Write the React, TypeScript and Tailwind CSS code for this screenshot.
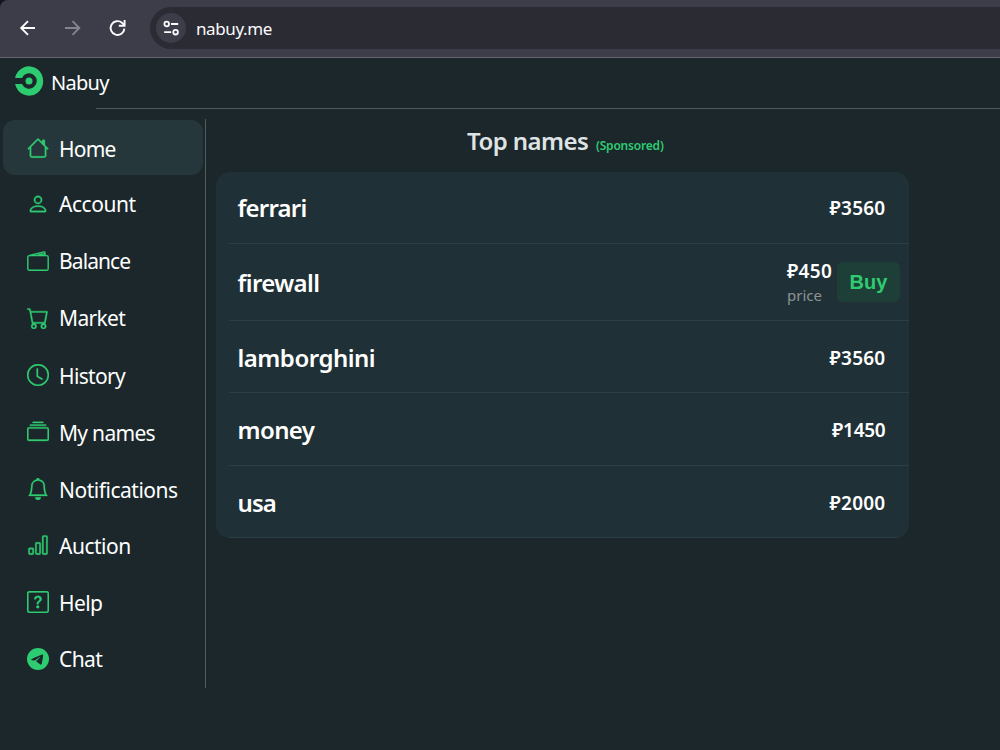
import type { ReactNode } from 'react';
import { BsBarChart, BsBell, BsCart, BsClock, BsCollection, BsHouse, BsPerson, BsQuestionSquare, BsTelegram } from 'react-icons/bs';

function BrowserBar() {
  return (
    <div className="h-[58px] shrink-0 bg-[#15141a]">
      <div className="flex h-[58px] items-start rounded-tl-[8px] border-b border-[#64636e] bg-[#3d3d4a]">
        <svg className="ml-[17px] mt-[17px] shrink-0" width="22" height="22" viewBox="0 0 22 22" fill="none" stroke="#fbfbfe" strokeWidth="1.9">
          <path d="M18 11H4.500M11 4.200 4.200 11l6.800 6.800" />
        </svg>
        <svg className="ml-[23px] mt-[17px] shrink-0" width="22" height="22" viewBox="0 0 22 22" fill="none" stroke="#85848e" strokeWidth="1.900">
          <path d="M3 11h13.500M10.500 4.200 17.300 11l-6.800 6.800" />
        </svg>
        <svg className="ml-[22px] mt-[17px] shrink-0" width="22" height="22" viewBox="0 0 22 22" fill="none" stroke="#fbfbfe" strokeWidth="1.900">
          <path d="M18.400 11.600a6.900 6.900 0 1 1-2.400-5.800l2.400 2.400" />
          <path d="M18.600 3v5.800h-5.800" />
        </svg>
        <div className="ml-[22px] mt-[7px] flex h-[42px] flex-1 items-center rounded-l-full bg-[#2b2b34] pl-[6px]">
          <div className="flex h-[30px] w-[30px] items-center justify-center rounded-full bg-[#3d3d4a]">
            <svg width="18" height="18" viewBox="0 0 18 18" fill="none" stroke="#fbfbfe" strokeWidth="1.800">
              <circle cx="4.700" cy="5" r="2.300" />
              <circle cx="13.600" cy="13.200" r="2.300" />
              <path d="M9 5h7.200M2.200 13.200h7" />
            </svg>
          </div>
          <span className="ml-[10px] pt-[2px] text-[17px] leading-[24px] tracking-[-0.400px] text-[#fbfbfe]">nabuy.me</span>
        </div>
      </div>
    </div>
  );
}

function Logo() {
  return (
    <svg className="mb-[2px]" width="30" height="30" viewBox="0 0 30 30">
      <circle cx="15" cy="15" r="3.500" fill="#2ecc71" />
      <path d="M1.100 12A14.200 14.700 0 1 1 1.100 18H8a7.700 7.700 0 1 0 0-6z" fill="#2ecc71" />
    </svg>
  );
}

function WalletIcon() {
  return (
    <svg width="22" height="22" viewBox="0 0 22 22" fill="none" stroke="currentColor" strokeWidth="1.400" strokeLinejoin="round">
      <rect x="0.800" y="5.600" width="20.400" height="14.700" rx="1.600" />
      <path d="M2.600 5.500 17 1.900q1-.2 1 .8v2.800M10.500 5.300 17.500 3.700" />
    </svg>
  );
}

const items: { label: string; icon: ReactNode; text: string }[] = [
  { label: 'Home', icon: <BsHouse />, text: 'pt-[2px] tracking-[-0.800px]' },
  { label: 'Account', icon: <BsPerson />, text: 'tracking-[-0.450px]' },
  { label: 'Balance', icon: <WalletIcon />, text: 'tracking-[-0.900px]' },
  { label: 'Market', icon: <BsCart />, text: 'tracking-[-0.650px]' },
  { label: 'History', icon: <BsClock />, text: 'pt-[2px] tracking-[-0.650px]' },
  { label: 'My names', icon: <BsCollection />, text: 'pt-[2px] tracking-[-0.700px]' },
  { label: 'Notifications', icon: <BsBell />, text: 'pt-[2px] tracking-[-0.480px]' },
  { label: 'Auction', icon: <BsBarChart />, text: 'pt-[2px] tracking-[-0.500px]' },
  { label: 'Help', icon: <BsQuestionSquare />, text: 'pt-[2px] tracking-[-0.600px]' },
  { label: 'Chat', icon: <BsTelegram />, text: 'tracking-[-0.600px]' },
];

function Sidebar() {
  return (
    <nav className="mt-[10px] flex h-[569px] w-[206px] shrink-0 flex-col gap-[1.850px] border-r border-[#545b5d] pl-[3px] pt-[1px]">
      {items.map((item, i) => (
        <a key={item.label} className={`flex h-[55px] w-[200px] shrink-0 items-center rounded-[12px] pl-[24px] ${i === 0 ? 'bg-[#25373b]' : ''}`}>
          <span className={`text-[22px] text-[#2ecc71] ${i === 9 || i === 2 ? '' : '[&_path]:stroke-[#2ecc71] [&_path]:[stroke-width:0.25px]'}`}>{item.icon}</span>
          <span className={`ml-[10px] whitespace-nowrap text-[21px] leading-[30px] text-white ${item.text}`}>{item.label}</span>
        </a>
      ))}
    </nav>
  );
}

const names = [
  { name: 'ferrari', price: '₽3560', height: 'h-[72px]', text: 'tracking-[-0.800px]' },
  { name: 'firewall', price: '₽450', height: 'h-[77px]', text: 'tracking-[-0.600px]', buy: true },
  { name: 'lamborghini', price: '₽3560', height: 'h-[72px]', text: 'pt-[2px] tracking-[-0.500px]' },
  { name: 'money', price: '₽1450', height: 'h-[73px]', text: 'tracking-[-0.600px]' },
  { name: 'usa', price: '₽2000', height: 'h-[72px]', text: 'pt-[2px] tracking-[-0.900px]' },
];

function NameList() {
  return (
    <div className="w-[693px] overflow-hidden rounded-[14px] bg-[#1f3136] pl-[13px]">
      {names.map((n, i) => (
        <div key={n.name} className={`flex items-center justify-between border-b border-[#2c3e43] pl-[8.500px] ${n.height} ${n.buy ? 'pr-[9px]' : 'pr-[23.500px]'}`}>
          <span className={`pt-[1px] text-[24px] font-semibold leading-[32px] text-white ${n.text}`}>{n.name}</span>
          {n.buy ? (
            <div className="flex items-center">
              <div className="flex w-[50px] flex-col pt-[1px]">
                <span className="text-[19px] font-semibold leading-[24px] tracking-[0.350px] text-white">{n.price}</span>
                <span className="text-[15px] leading-[24px] text-[#8d9293]">price</span>
              </div>
              <button className="h-[40px] w-[63px] rounded-[6px] bg-[#1e3f38] font-['Liberation_Sans'] text-[20px] font-bold text-[#2ecc71]">Buy</button>
            </div>
          ) : (
            <span className={`text-[19px] font-semibold leading-[26px] text-white ${i > 1 ? 'pt-[2px]' : ''} ${n.price === '₽1450' ? 'tracking-[-0.250px]' : 'tracking-[0.250px]'}`}>{n.price}</span>
          )}
        </div>
      ))}
    </div>
  );
}

export default function App() {
  return (
    <div className="flex h-[750px] w-[1000px] flex-col overflow-hidden bg-[#1b272b] font-['Noto_Sans','Open_Sans',sans-serif]">
      <BrowserBar />
      <header className="flex h-[51px] shrink-0 flex-col justify-between">
        <div className="flex h-[47px] items-center pl-[14px]">
          <Logo />
          <span className="ml-[7px] pt-[2px] text-[20px] leading-[28px] tracking-[-0.700px] text-white">Nabuy</span>
        </div>
        <div className="ml-[96px] h-px bg-[#4f585b]" />
      </header>
      <div className="flex flex-1">
        <Sidebar />
        <main className="ml-[10px] flex flex-1 flex-col">
          <div className="flex h-[63px] w-[693px] items-baseline pl-[251px] pt-[15px]">
            <h1 className="w-[122px] whitespace-nowrap text-[24px] font-semibold leading-[34px] tracking-[-0.550px] text-[#dfe3e4]">Top names</h1>
            <span className="ml-[7px] whitespace-nowrap text-[12px] font-semibold tracking-[-0.200px] text-[#2ecc71]">(Sponsored)</span>
          </div>
          <NameList />
        </main>
      </div>
    </div>
  );
}
